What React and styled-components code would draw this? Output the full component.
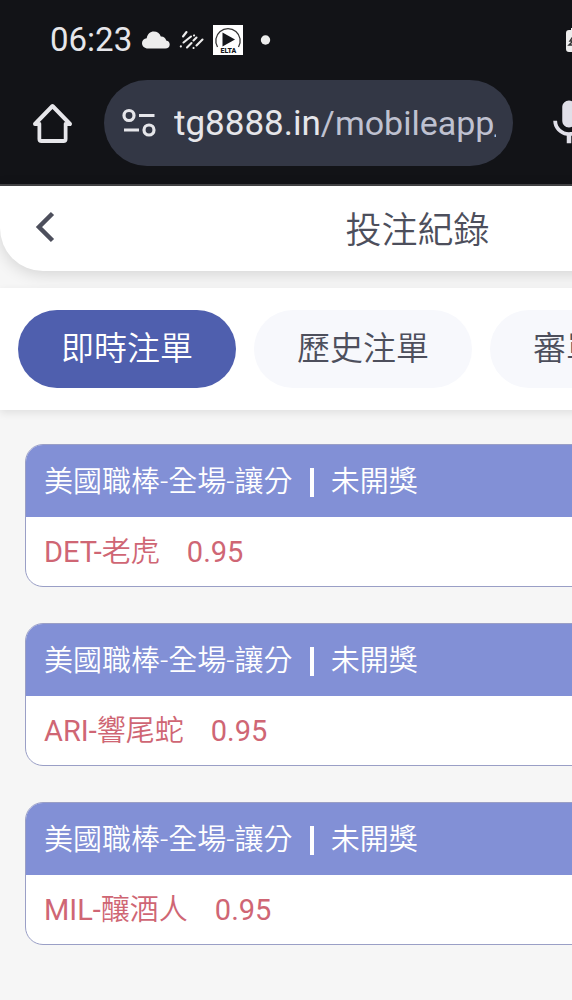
import React from "react";
import styled, { createGlobalStyle } from "styled-components";

const GlobalStyle = createGlobalStyle`
  *, *::before, *::after { box-sizing: border-box; }
  body {
    margin: 0;
    background: #f6f6f6;
    font-family: Roboto, "Noto Sans CJK TC", sans-serif;
    font-weight: 350;
    color: #4d4f5c;
  }
  button { font: inherit; color: inherit; border: 0; background: none; padding: 0; cursor: pointer; }
`;

const Viewport = styled.div`
  overflow: hidden;
  min-height: 100vh;
`;

const Page = styled.div`
  width: 146%;
`;

const BrowserChrome = styled.header`
  background: #121317;
  border-bottom: 2px solid #444447;
  color: #e6e6ea;
  font-weight: 400;
`;

const StatusBar = styled.div`
  display: flex;
  align-items: center;
  height: 80px;
  padding-left: 50px;

  svg { flex: none; }
`;

const Clock = styled.time`
  width: 92px;
  font-size: 33px;
  line-height: 40px;
`;

const StatusIcons = styled.div`
  display: flex;
  align-items: center;
  gap: 9px;
  flex: 0 0 424px;
`;

const AddressRow = styled.div`
  display: flex;
  align-items: center;
  padding: 0 4px 18px 30px;
`;

const IconButton = styled.button`
  display: flex;
  flex: none;
`;

const AddressBar = styled.div`
  display: flex;
  flex: none;
  align-items: center;
  gap: 18px;
  width: 51%;
  height: 86px;
  margin: 0 29px;
  padding: 0 17px 0 18px;
  border-radius: 43px;
  background: #333745;
`;

const Url = styled.button`
  flex: 1;
  && {
    min-width: 0;
    overflow: hidden;
    white-space: nowrap;
    text-align: left;
    font-size: 35px;
    line-height: 48px;
  }
`;

const UrlPath = styled.span`
  font-size: 34px;
  color: #bfc1d0;
`;

const TitleBar = styled.div`
  position: relative;
  display: grid;
  grid-template-columns: 60px 1fr 60px;
  align-items: center;
  height: 85px;
  background: #fff;
  border-radius: 0 0 43px 43px;
  box-shadow: 0 3px 16px rgba(0, 0, 0, 0.14);
`;

const BackButton = styled(IconButton)`
  && { padding: 0 0 3px 32px; }
`;

const Title = styled.h1`
  margin: 0;
  padding-top: 4px;
  text-align: center;
  font-size: 36px;
  line-height: 48px;
  font-weight: inherit;
`;

const Tabs = styled.nav`
  position: relative;
  display: flex;
  gap: 18px;
  margin-top: 17px;
  padding: 22px 18px;
  background: #fff;
  box-shadow: 0 3px 8px rgba(0, 0, 0, 0.09);
`;

const Tab = styled.button`
  flex: none;
  && {
    height: 78px;
    padding: 0 43px;
    border-radius: 39px;
    font-size: 33px;
    line-height: 48px;
    background: ${(p) => (p.$active ? "#4f5fae" : "#f7f8fc")};
    color: ${(p) => (p.$active ? "#fff" : "#4d4f5c")};
  }
`;

const BetList = styled.main`
  display: flex;
  flex-direction: column;
  gap: 36px;
  padding: 34px 25px 55px;
`;

const BetCard = styled.article`
  overflow: hidden;
  border: 1px solid #9a9fc6;
  border-radius: 18px;
  background: #fff;
  font-size: 29px;
  line-height: 40px;
`;

const BetHeader = styled.h2`
  display: flex;
  align-items: center;
  gap: 17px;
  margin: 0;
  padding: 17px 18px 15px;
  background: #8290d6;
  color: #fff;
  font-size: inherit;
  font-weight: inherit;
`;

const Divider = styled.span`
  width: 4px;
  height: 29px;
  background: #fff;
`;

const BetBody = styled.p`
  display: flex;
  gap: 27px;
  margin: 0;
  padding: 15px 18px 14px;
  color: #cf6674;
`;

const Latin = styled.span`
  font-weight: 400;
`;

const CloudIcon = () => (
  <svg width="28" height="18" viewBox="0 0 28 18" fill="#ededed" aria-hidden="true">
    <path d="M6 17.5C2.600 17.500 0 15.200 0 12C0 9.200 2 7.400 4.700 7.200C5.400 3 8.200 .5 11.800 .5C15.200 .5 17.700 2.300 18.800 5.400C22 5.300 23.700 7 24.200 9.500C26.400 9.900 27.700 11.400 27.700 13.400C27.700 15.800 25.900 17.500 23.300 17.500Z" />
  </svg>
);

const RainIcon = () => (
  <svg width="25" height="20" viewBox="0 0 25 20" stroke="#ededed" strokeWidth="2.100" strokeLinecap="round" fill="none" aria-hidden="true">
    <path d="M4 6.500L7.500 2M1.800 16.400L1.900 16.300M4.500 12.500L12 6.500M15 5.500L15.100 5.400M8 17.500L12.500 13M14.500 10.500L17.500 7.500M14.500 18L14.600 17.900M17.500 15.500L23.500 9.500" />
  </svg>
);

const EltaIcon = () => (
  <svg width="30" height="30" viewBox="0 0 30 30" aria-label="ELTA">
    <path d="M0 0H30V30H0Z" fill="#fff" />
    <path d="M4.500 22A12.200 12.200 0 1 1 25.500 22" fill="none" stroke="#333" strokeWidth="1.300" />
    <path d="M9.500 7.500L22 14.500L9.500 21.500Z" fill="#16171b" />
    <text x="15.500" y="28" textAnchor="middle" fontSize="7" fontWeight="900" fontFamily="Roboto, sans-serif" fill="#16171b">ELTA</text>
  </svg>
);

const DotIcon = () => (
  <svg width="28" height="10" viewBox="0 0 28 10" fill="#ededed" aria-hidden="true">
    <circle cx="13.500" cy="5" r="4.700" />
  </svg>
);

const BatteryIcon = () => (
  <svg width="16" height="26" viewBox="0 0 16 26" aria-hidden="true">
    <path d="M3 3H5V1H11V3H13Q16 3 16 6V22Q16 25 13 25H3Q0 25 0 22V6Q0 3 3 3Z" fill="#ededed" />
    <path d="M8 8L4 14H7L3 18H8" fill="none" stroke="#333" strokeWidth="1.500" />
  </svg>
);

const HomeIcon = () => (
  <svg width="45" height="45" viewBox="0 0 45 45" fill="none" stroke="#e6e6ea" strokeWidth="4" strokeLinejoin="round" strokeLinecap="round" aria-hidden="true">
    <path d="M9.500 23H5L22.500 5L40 23H35.500V38Q35.500 40 33.500 40H11.500Q9.500 40 9.500 38Z" />
    <path d="M11.500 20H33.500V38H11.500Z" fill="#121317" stroke="none" />
    <path d="M13 19L22.500 9L32 19V22H13Z" fill="#121317" stroke="none" />
  </svg>
);

const TuneIcon = () => (
  <svg width="34" height="30" viewBox="0 0 34 30" fill="none" stroke="#e6e6ea" strokeWidth="3.200" aria-hidden="true">
    <circle cx="7" cy="7.500" r="5" />
    <path d="M17 7.500H32.500M2 22H17" />
    <circle cx="27" cy="22" r="5" />
  </svg>
);

const MicIcon = () => (
  <svg width="54" height="54" viewBox="0 0 24 24" fill="#e0dfe8" aria-hidden="true">
    <path d="M12 14c1.660 0 3-1.340 3-3V5c0-1.660-1.340-3-3-3S9 3.340 9 5v6c0 1.660 1.340 3 3 3zm5.300-3c0 3-2.540 5.100-5.300 5.100S6.700 14 6.700 11H5c0 3.410 2.720 6.230 6 6.720V21h2v-3.280c3.280-.48 6-3.300 6-6.720h-1.700z" />
  </svg>
);

const BackIcon = () => (
  <svg width="26" height="34" viewBox="0 0 26 34" fill="none" stroke="#4d4f5c" strokeWidth="4.500" aria-hidden="true">
    <path d="M20.500 3.500L7 17L20.500 30.500" />
  </svg>
);

const tabs = ["即時注單", "歷史注單", "審單注單"];

const bets = [
  { code: "DET-", team: "老虎", odds: "0.95" },
  { code: "ARI-", team: "響尾蛇", odds: "0.95" },
  { code: "MIL-", team: "釀酒人", odds: "0.95" },
];

export default function App() {
  return (
    <Viewport>
      <GlobalStyle />
      <Page>
        <BrowserChrome>
          <StatusBar>
            <Clock>06:23</Clock>
            <StatusIcons>
              <CloudIcon />
              <RainIcon />
              <EltaIcon />
              <DotIcon />
            </StatusIcons>
            <BatteryIcon />
          </StatusBar>
          <AddressRow>
            <IconButton aria-label="Home"><HomeIcon /></IconButton>
            <AddressBar>
              <IconButton aria-label="Site settings"><TuneIcon /></IconButton>
              <Url>tg8888.in<UrlPath>/mobileapp_</UrlPath></Url>
            </AddressBar>
            <IconButton aria-label="Voice search"><MicIcon /></IconButton>
          </AddressRow>
        </BrowserChrome>

        <TitleBar>
          <BackButton aria-label="返回"><BackIcon /></BackButton>
          <Title>投注紀錄</Title>
        </TitleBar>

        <Tabs>
          {tabs.map((label, i) => (
            <Tab key={label} $active={i === 0}>{label}</Tab>
          ))}
        </Tabs>

        <BetList>
          {bets.map((bet) => (
            <BetCard key={bet.code}>
              <BetHeader>
                <span>美國職棒-全場-讓分</span>
                <Divider />
                <span>未開獎</span>
              </BetHeader>
              <BetBody>
                <span><Latin>{bet.code}</Latin>{bet.team}</span>
                <Latin>{bet.odds}</Latin>
              </BetBody>
            </BetCard>
          ))}
        </BetList>
      </Page>
    </Viewport>
  );
}
